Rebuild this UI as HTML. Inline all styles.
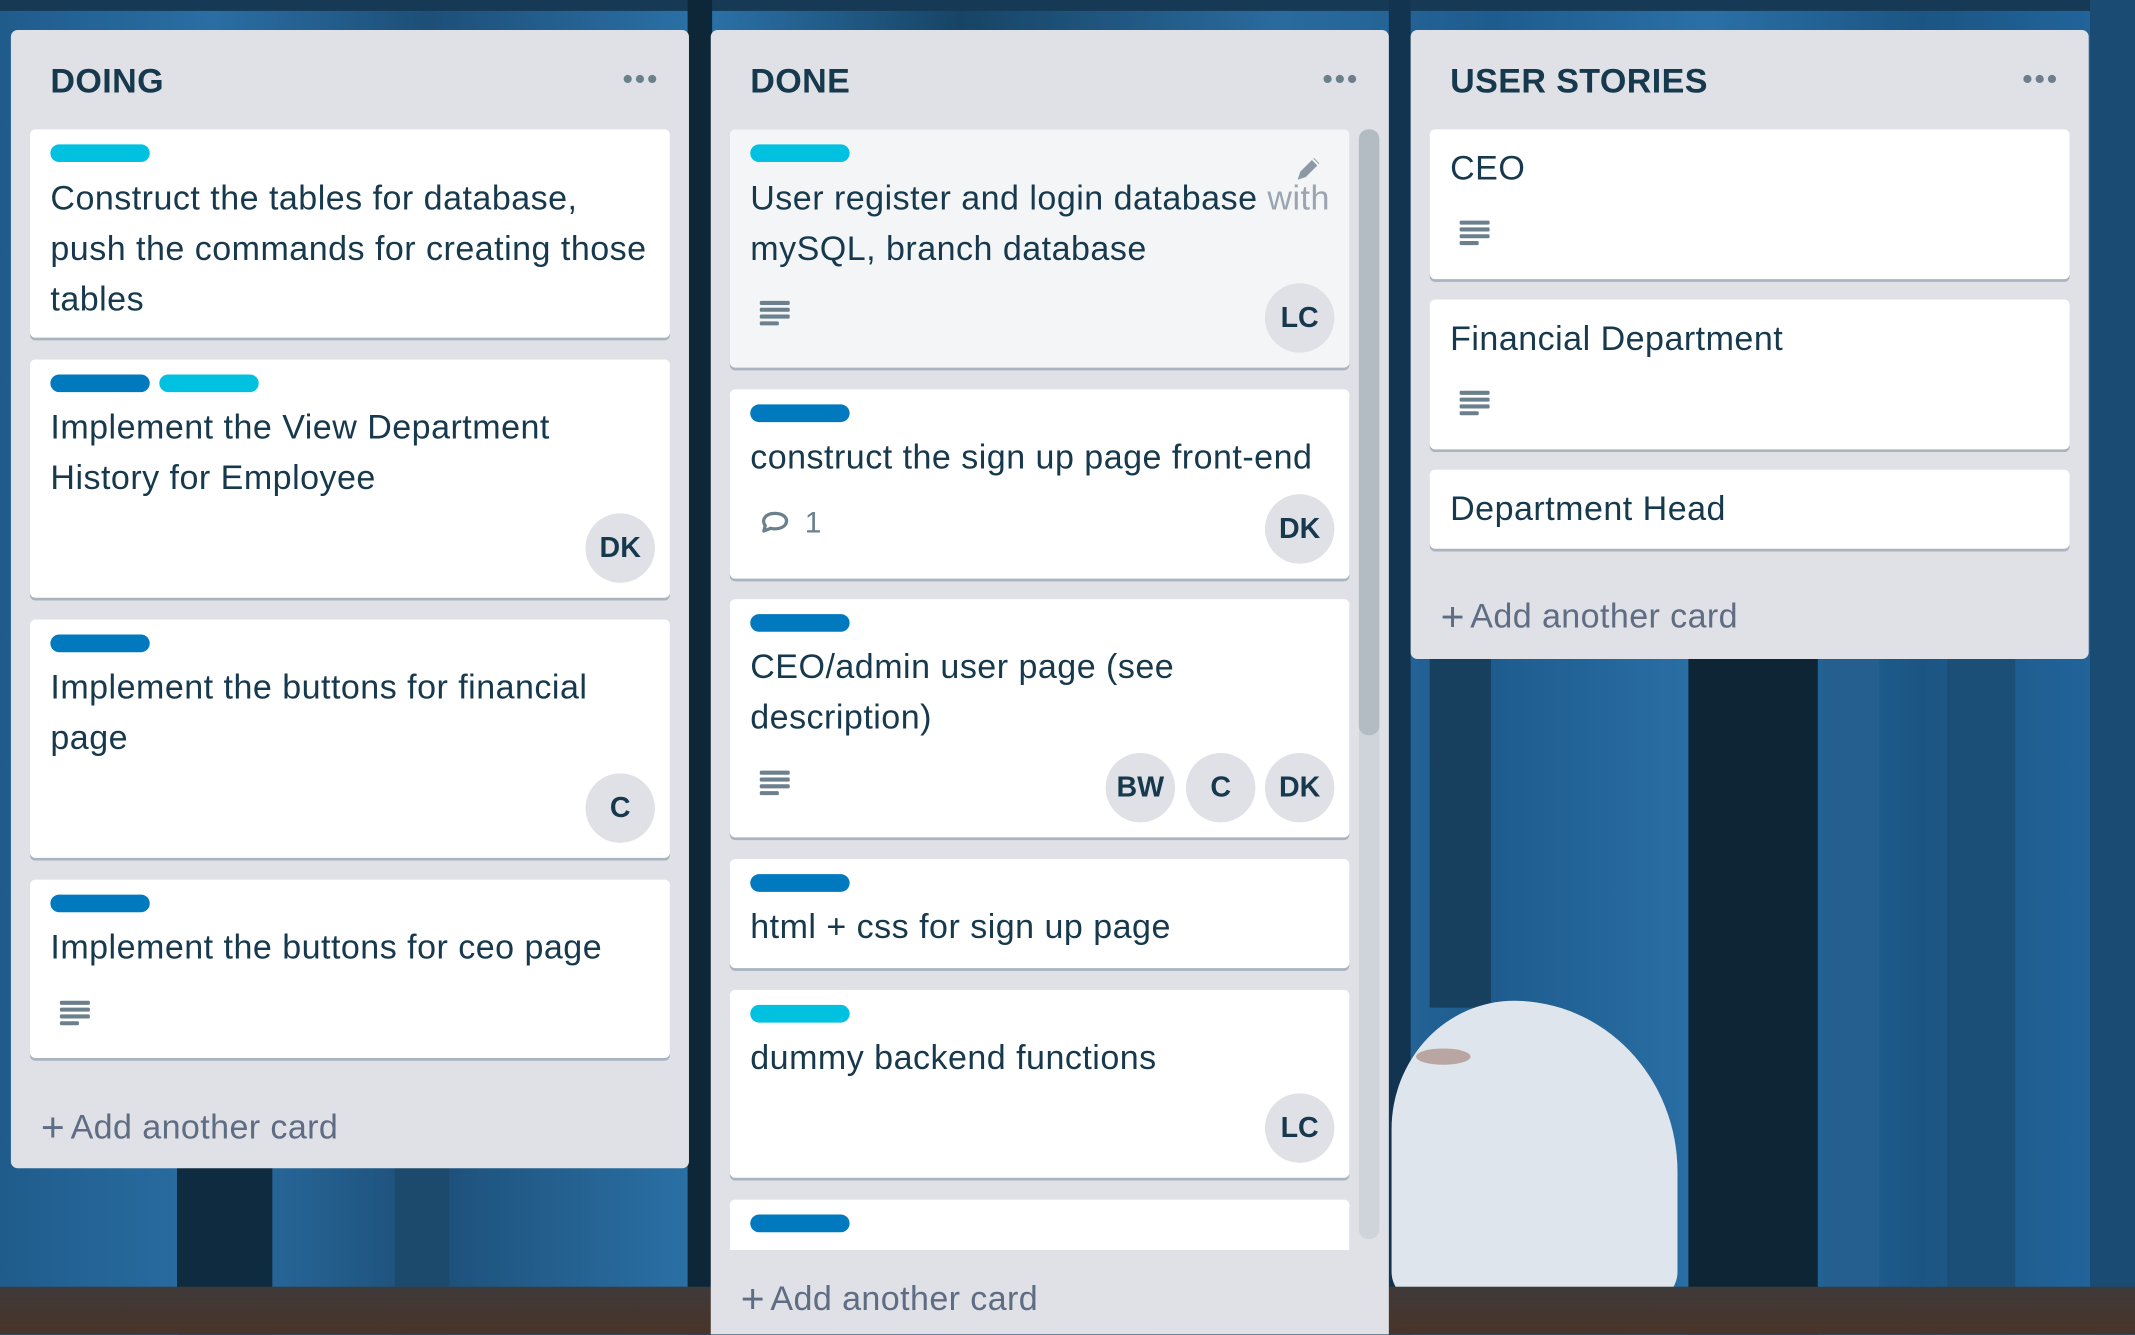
<!DOCTYPE html>
<html><head><meta charset="utf-8">
<style>
*{box-sizing:border-box;margin:0;padding:0}
html,body{width:2135px;height:1335px;overflow:hidden;background:#1d527f}
#w{position:absolute;left:0;top:0;width:1568px;height:980px;transform:scale(1.36161);transform-origin:0 0;font-family:"Liberation Sans",Arial,sans-serif;color:#17394d;overflow:hidden}
.bg{position:absolute;left:0;top:0;width:1568px;height:980px;background:linear-gradient(90deg,#1f5c8c 0%,#2a6ea3 10%,#1d4f78 20%,#2b72a8 33%,#174466 45%,#2a6b9e 60%,#1e5c8e 70%,#2a70a6 80%,#1b5583 90%,#2368a0 100%)}
.t{position:absolute}
.list{position:absolute;background:#dfe1e6;border-radius:5px}
.h{position:absolute;left:29px;top:24px;font-weight:bold;font-size:25px;letter-spacing:.3px}
.dots{position:absolute;top:33px;display:flex;gap:3px}
.dots i{width:6px;height:6px;border-radius:50%;background:#6b808c;display:block}
.card{position:absolute;background:#fff;border-radius:4px;box-shadow:0 2px 0 #a9b4bf}
.lab{position:absolute;top:11px;height:13px;width:73px;border-radius:7px}
.cy{background:#00c2e0}.bl{background:#0079bf}
.txt{position:absolute;left:15px;font-size:25px;letter-spacing:.35px;line-height:37px;white-space:nowrap}
.av{position:absolute;width:51px;height:51px;border-radius:50%;background:#dfe1e6;font-weight:bold;font-size:21px;display:flex;align-items:center;justify-content:center;color:#17394d}
.desc{position:absolute;width:22px;height:18px}
.desc i{display:block;height:2.6px;background:#6b808c;margin-bottom:2.4px;border-radius:1px}
.add{position:absolute;font-size:25px;letter-spacing:.3px;color:#5e6c84}
.add b{font-weight:normal;font-size:30px;position:relative;top:2px;margin-right:4px}
</style></head><body><div id="w">
<div class="bg"></div>
<div class="t" style="left:0;top:0;width:1568px;height:8px;background:#163a55"></div>
<div class="t" style="left:130px;top:850px;width:70px;height:130px;background:#0f2b40"></div>
<div class="t" style="left:290px;top:850px;width:40px;height:130px;background:#1c4a6c"></div>
<div class="t" style="left:505px;top:0;width:18px;height:980px;background:#0e2738"></div>
<div class="t" style="left:1020px;top:0;width:16px;height:980px;background:#123450"></div>
<div class="t" style="left:1240px;top:480px;width:95px;height:500px;background:#0d2535"></div>
<div class="t" style="left:1340px;top:480px;width:40px;height:500px;background:#245f8f"></div>
<div class="t" style="left:1430px;top:480px;width:50px;height:500px;background:#1c4f78"></div>
<div class="t" style="left:1050px;top:480px;width:45px;height:260px;background:#173f5e"></div>
<div class="t" style="left:1535px;top:0;width:33px;height:980px;background:#1a4b72"></div>
<div class="t" style="left:1022px;top:735px;width:210px;height:220px;background:#dfe5ec;border-radius:45% 60% 10% 10%"></div>
<div class="t" style="left:1040px;top:770px;width:40px;height:12px;background:#b9a6a2;border-radius:50%"></div>
<div class="t" style="left:0;top:945px;width:1568px;height:35px;background:linear-gradient(#3e3a3a,#4a3428)"></div>

<div class="list" style="left:8px;top:22px;width:498px;height:836px">
 <div class="h">DOING</div>
 <div class="dots" style="left:450px"><i></i><i></i><i></i></div>
 <div class="card" style="left:14px;top:73px;width:470px;height:153px">
  <div class="lab cy" style="left:15px"></div>
  <div class="txt" style="top:33px">Construct the tables for database,<br>push the commands for creating those<br>tables</div>
 </div>
 <div class="card" style="left:14px;top:242px;width:470px;height:175px">
  <div class="lab bl" style="left:15px"></div><div class="lab cy" style="left:95px"></div>
  <div class="txt" style="top:32px">Implement the View Department<br>History for Employee</div>
  <div class="av" style="left:408px;top:113px">DK</div>
 </div>
 <div class="card" style="left:14px;top:433px;width:470px;height:175px">
  <div class="lab bl" style="left:15px"></div>
  <div class="txt" style="top:32px">Implement the buttons for financial<br>page</div>
  <div class="av" style="left:408px;top:113px">C</div>
 </div>
 <div class="card" style="left:14px;top:624px;width:470px;height:131px">
  <div class="lab bl" style="left:15px"></div>
  <div class="txt" style="top:32px">Implement the buttons for ceo page</div>
  <div class="desc" style="left:22px;top:89px"><i></i><i></i><i></i><i style="width:14px"></i></div>
 </div>
 <div class="add" style="left:22px;top:788px"><b>+</b>Add another card</div>
</div>

<div class="list" style="left:522px;top:22px;width:498px;height:980px">
 <div class="h">DONE</div>
 <div class="dots" style="left:450px"><i></i><i></i><i></i></div>
 <div class="t" style="left:476px;top:73px;width:15px;height:815px;background:#cfd4da;border-radius:7px"></div>
 <div class="t" style="left:476px;top:73px;width:15px;height:445px;background:#b3bcc3;border-radius:7px"></div>
 <div style="position:absolute;left:0;top:73px;width:478px;height:823px;overflow:hidden">
 <div class="card" style="left:14px;top:0;width:455px;height:175px;background:#f4f5f7">
  <div class="lab cy" style="left:15px"></div>
  <div class="txt" style="top:33px">User register and login database <span style="color:#9aa5b0">with</span><br>mySQL, branch database</div>
  <svg class="t" style="left:413px;top:17px" width="24" height="24" viewBox="0 0 24 24"><path d="M4 20 L6 14 L16 4 L20 8 L10 18 Z" fill="#8c99a4"/><path d="M15 5 L19 9" stroke="#f4f5f7" stroke-width="1.5"/></svg>
  <div class="desc" style="left:22px;top:126px"><i></i><i></i><i></i><i style="width:14px"></i></div>
  <div class="av" style="left:393px;top:113px">LC</div>
 </div>
 <div class="card" style="left:14px;top:191px;width:455px;height:139px">
  <div class="lab bl" style="left:15px"></div>
  <div class="txt" style="top:32px">construct the sign up page front-end</div>
  <svg class="t" style="left:21px;top:87px" width="24" height="22" viewBox="0 0 24 22"><path d="M4 17 L5 13 C2 9 5 4 12 4 C19 4 22 8 20 12 C18 15 13 16 9 15 Z" fill="none" stroke="#6b808c" stroke-width="2.4" stroke-linejoin="round"/></svg>
  <div class="t" style="left:55px;top:85px;font-size:22px;color:#6b808c">1</div>
  <div class="av" style="left:393px;top:77px">DK</div>
 </div>
 <div class="card" style="left:14px;top:345px;width:455px;height:175px">
  <div class="lab bl" style="left:15px"></div>
  <div class="txt" style="top:32px">CEO/admin user page (see<br>description)</div>
  <div class="desc" style="left:22px;top:126px"><i></i><i></i><i></i><i style="width:14px"></i></div>
  <div class="av" style="left:276px;top:113px">BW</div>
  <div class="av" style="left:335px;top:113px">C</div>
  <div class="av" style="left:393px;top:113px">DK</div>
 </div>
 <div class="card" style="left:14px;top:536px;width:455px;height:80px">
  <div class="lab bl" style="left:15px"></div>
  <div class="txt" style="top:32px">html + css for sign up page</div>
 </div>
 <div class="card" style="left:14px;top:632px;width:455px;height:138px">
  <div class="lab cy" style="left:15px"></div>
  <div class="txt" style="top:32px">dummy backend functions</div>
  <div class="av" style="left:393px;top:76px">LC</div>
 </div>
 <div class="card" style="left:14px;top:786px;width:455px;height:100px">
  <div class="lab bl" style="left:15px"></div>
 </div>
 </div>
 <div class="add" style="left:22px;top:914px"><b>+</b>Add another card</div>
</div>

<div class="list" style="left:1036px;top:22px;width:498px;height:462px">
 <div class="h">USER STORIES</div>
 <div class="dots" style="left:450px"><i></i><i></i><i></i></div>
 <div class="card" style="left:14px;top:73px;width:470px;height:110px">
  <div class="txt" style="top:11px">CEO</div>
  <div class="desc" style="left:22px;top:67px"><i></i><i></i><i></i><i style="width:14px"></i></div>
 </div>
 <div class="card" style="left:14px;top:198px;width:470px;height:110px">
  <div class="txt" style="top:11px">Financial Department</div>
  <div class="desc" style="left:22px;top:67px"><i></i><i></i><i></i><i style="width:14px"></i></div>
 </div>
 <div class="card" style="left:14px;top:323px;width:470px;height:58px">
  <div class="txt" style="top:11px">Department Head</div>
 </div>
 <div class="add" style="left:22px;top:413px"><b>+</b>Add another card</div>
</div>
</div></body></html>
